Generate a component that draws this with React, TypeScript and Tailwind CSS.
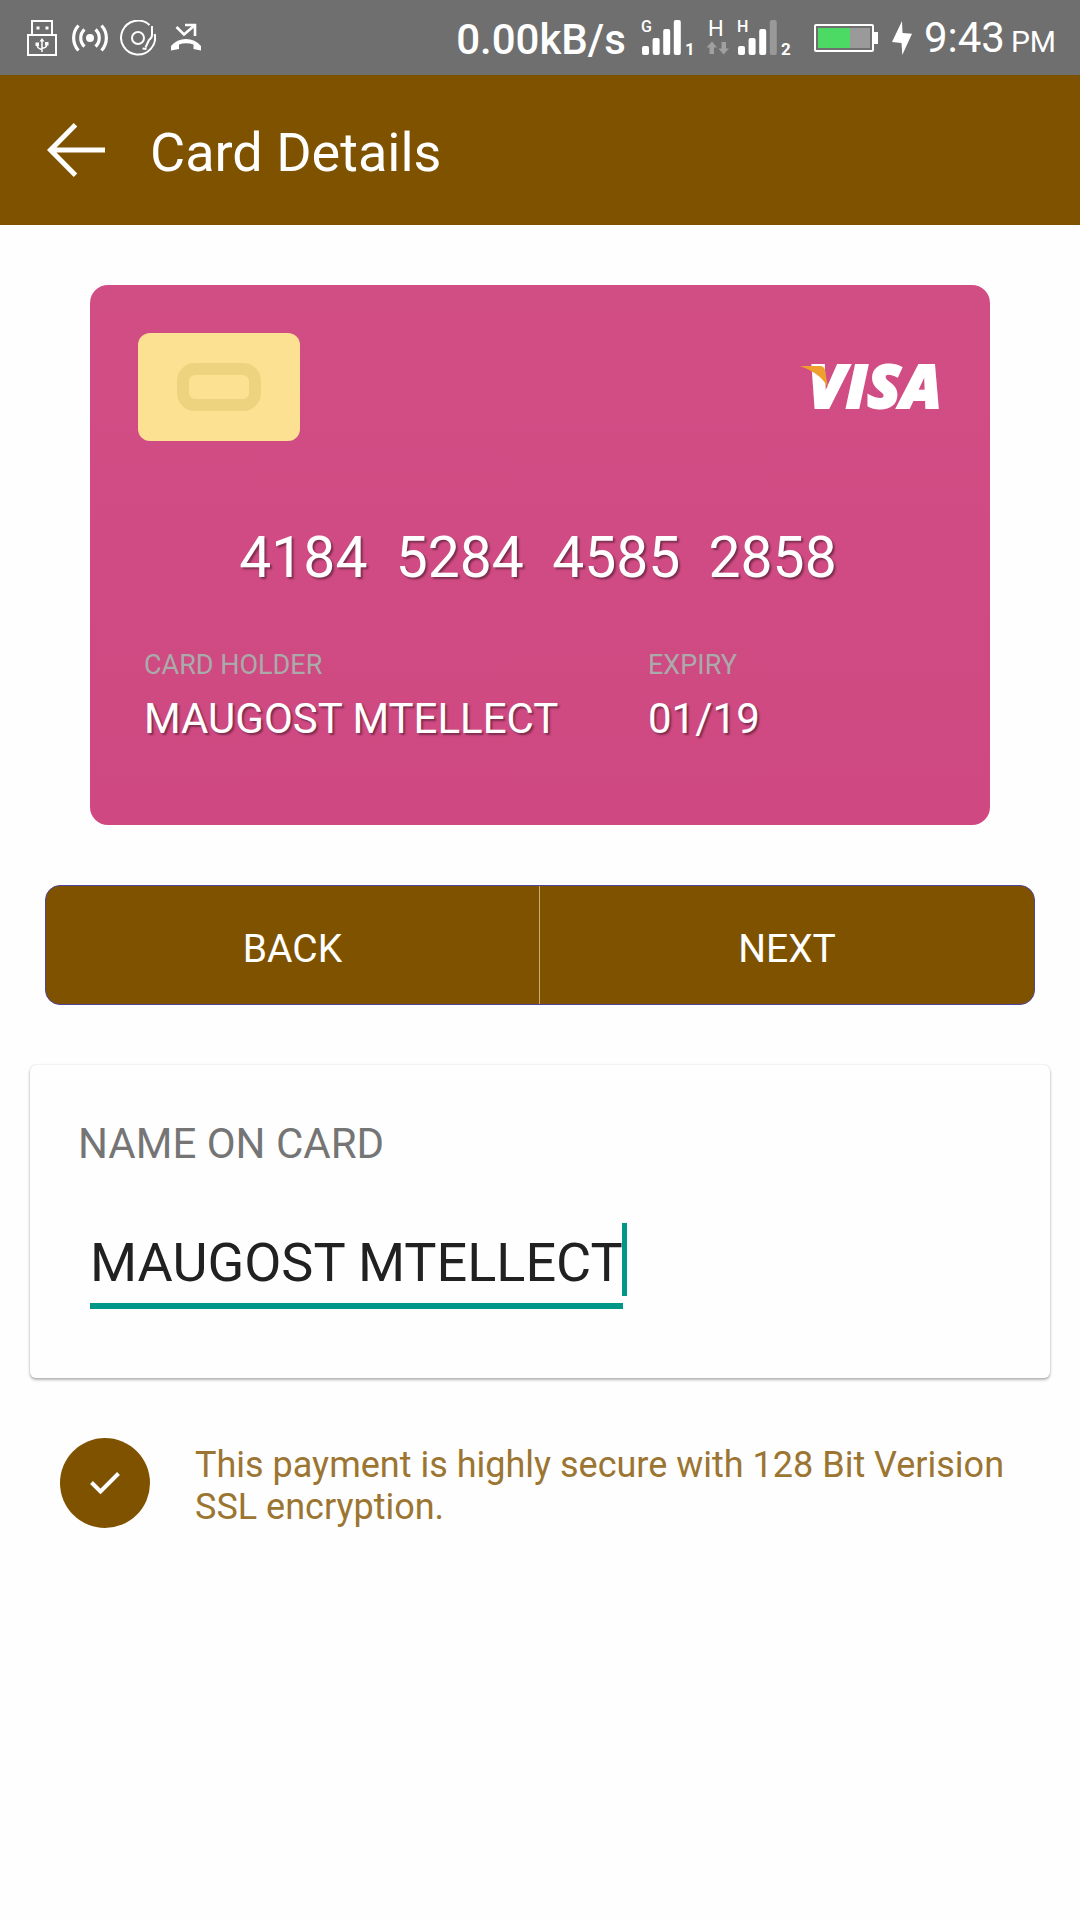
import { useState } from "react";

function UsbIcon() {
  return (
    <svg className="h-9 w-[30px]" viewBox="0 0 30 36" fill="none" stroke="white" strokeWidth="2" aria-hidden="true">
      <path d="M5 14V1h20v13" />
      <path d="M1 15h28v20H1z" />
      <path d="M9.500 6.500h3v3h-3zM18.500 6.500h3v3h-3z" fill="white" stroke="none" />
      <path d="M15 20v12M10.500 24.500v1.500q0 2.500 4.500 3.500M19.500 23.500v2q0 2-4.500 3" strokeWidth="1.500" />
      <path d="M15 18l2.500 3.500h-5zM8.500 22.500h3.500v3.500H8.500zM18 22h3.500v3.500H18z" fill="white" stroke="none" />
    </svg>
  );
}

function HotspotIcon() {
  return (
    <svg className="h-9 w-9" viewBox="0 0 36 36" fill="none" stroke="white" strokeWidth="3.200" aria-hidden="true">
      <circle cx="18" cy="18" r="4" fill="white" stroke="none" />
      <path d="M12.500 9.500a11.500 11.500 0 0 0 0 17M23.500 9.500a11.500 11.500 0 0 1 0 17" />
      <path d="M6.500 5.500a18.500 18.500 0 0 0 0 25M29.500 5.500a18.500 18.500 0 0 1 0 25" />
    </svg>
  );
}

function DiscIcon() {
  return (
    <svg className="h-9 w-9" viewBox="0 0 36 36" fill="none" stroke="white" strokeWidth="2" aria-hidden="true">
      <path d="M29.500 5A17 17 0 1 0 34.700 14" />
      <circle cx="18" cy="18" r="6" />
      <path d="M32 6v9q0 3-3 5l-3.500 7.500M22.500 28.500l4 .5" />
    </svg>
  );
}

function MissedCallIcon() {
  return (
    <svg className="h-9 w-8" viewBox="0 0 32 36" aria-hidden="true">
      <path d="M6.500 7L14 14.500 24.500 5.500M15 5h10v11" fill="none" stroke="white" strokeWidth="2.600" />
      <path d="M1 30.500v-4.500Q7 19 16 19t15 7v4.500L23.500 29v-4.500Q16 22 9 24.500V29z" fill="white" />
    </svg>
  );
}

type SignalProps = { network: string; sim: string; level: number };

function SignalIcon({ network, sim, level }: SignalProps) {
  const tops = [26, 18, 9, 0];
  return (
    <svg className="h-9 w-[52px] overflow-visible" viewBox="0 0 52 36" fill="white" aria-hidden="true">
      {tops.map((top, i) => (
        <rect key={top} x={i * 11 - i * 0.4} y={top} width="7" height={35 - top} rx="2" fill={i < level ? "white" : "#999999"} />
      ))}
      <text x="-1" y="12" fontSize="16" fontWeight="500">{network}</text>
      <text x="43" y="35" fontSize="17" fontWeight="700">{sim}</text>
    </svg>
  );
}

function DataIcon() {
  return (
    <svg className="h-9 w-[23px] overflow-visible" viewBox="0 0 23 36" aria-hidden="true">
      <text x="2" y="16" fontSize="22" fill="white">H</text>
      <path d="M6 21.500l5 6H8V34H3.500v-6.500h-3zM17.500 34.500l-5-6h3V22H20v6.500h3z" fill="#a0a0a0" />
    </svg>
  );
}

function BatteryIcon() {
  return (
    <svg className="h-7 w-16" viewBox="0 0 64 28" aria-hidden="true">
      <rect x="1" y="1" width="58" height="26" rx="1" fill="none" stroke="white" strokeWidth="2" />
      <path d="M60 8h4v12h-4z" fill="white" />
      <path d="M4 4h32v20H4z" fill="#4cda64" />
      <path d="M36 4h20v20H36z" fill="#9a9a9a" />
    </svg>
  );
}

function StatusBar() {
  return (
    <div className="flex h-[75px] items-center justify-between bg-[#6f6f6f] pt-px pr-6 pl-[27px] text-white">
      <div className="flex items-center">
        <UsbIcon />
        <span className="ml-[15px]"><HotspotIcon /></span>
        <span className="ml-3"><DiscIcon /></span>
        <span className="ml-[14px]"><MissedCallIcon /></span>
      </div>
      <div className="flex items-center whitespace-nowrap">
        <span className="pt-1 text-[42px] leading-[50px] font-medium">0.00kB/s</span>
        <span className="ml-4"><SignalIcon network="G" sim="1" level={4} /></span>
        <span className="ml-3"><DataIcon /></span>
        <span className="ml-[9px]"><SignalIcon network="H" sim="2" level={3} /></span>
        <span className="ml-6"><BatteryIcon /></span>
        <svg className="ml-[14px] h-[34px] w-5" viewBox="0 0 20 34" fill="white" aria-hidden="true">
          <path d="M10 0L0 21l9.500 1 .8 12L20 12.700l-9.500-.7z" />
        </svg>
        <span className="ml-3 flex items-baseline gap-1.5 pt-1 text-[42px] leading-[50px]">
          9:43 <span className="text-[30px]">PM</span>
        </span>
      </div>
    </div>
  );
}

function VisaLogo() {
  return (
    <svg className="h-11 w-[142px] overflow-visible" viewBox="0 0 142 44" role="img" aria-label="Visa">
      <text
        x="8"
        y="43"
        fontSize="61"
        fontWeight="800"
        fontStyle="italic"
        fill="white"
        stroke="white"
        strokeWidth="2"
        fontFamily="'Open Sans', sans-serif"
      >
        VISA
      </text>
      <path d="M0 1h20q4 0 5 4l3 18Q22 9 0 1z" fill="#ee9f2d" />
    </svg>
  );
}

function CreditCard({ name }: { name: string }) {
  return (
    <section className="mx-[90px] rounded-[18px] bg-linear-to-b from-[#d14e85] to-[#cf4881] px-12 pt-12 pb-[81px] text-white">
      <div className="flex items-center justify-between">
        <div className="flex h-[108px] w-[162px] items-center justify-center rounded-xl bg-[#fce192]">
          <div className="h-12 w-[84px] rounded-[18px] border-12 border-[#edd27f]" />
        </div>
        <VisaLogo />
      </div>
      <p className="mt-[84px] pr-1 text-center text-[57px] leading-[66px] whitespace-pre [text-shadow:2px_2px_2px_rgba(0,0,0,0.4)]">
        {"4184  5284  4585  2858"}
      </p>
      <dl className="mt-[58px] grid grid-cols-[12fr_7fr] pl-1.5">
        <div>
          <dt className="text-[27px] leading-8 text-[#aaaaaa]">CARD HOLDER</dt>
          <dd className="mt-[13px] text-[42px] leading-[50px] whitespace-nowrap [text-shadow:2px_2px_2px_rgba(0,0,0,0.4)]">{name}</dd>
        </div>
        <div>
          <dt className="text-[27px] leading-8 text-[#aaaaaa]">EXPIRY</dt>
          <dd className="mt-[13px] text-[42px] leading-[50px] [text-shadow:2px_2px_2px_rgba(0,0,0,0.4)]">01/19</dd>
        </div>
      </dl>
    </section>
  );
}

export default function App() {
  const [name, setName] = useState("MAUGOST MTELLECT");
  return (
    <div className="min-h-screen bg-[#fefefe] font-['Roboto',sans-serif]">
      <StatusBar />
      <header className="flex h-[150px] items-center bg-[#7f5200] pl-[47px] text-white">
        <button type="button" aria-label="Go back">
          <svg className="h-[54px] w-[58px]" viewBox="0 0 58 54" fill="none" stroke="white" strokeWidth="5" aria-hidden="true">
            <path d="M28.500 1.800L3.500 27l25 25.200M4 27h54" />
          </svg>
        </button>
        <h1 className="ml-[45px] pt-1.5 text-[54px] leading-[64px]">Card Details</h1>
      </header>

      <main className="pt-[60px]">
        <CreditCard name={name} />

        <div className="mx-[45px] mt-[60px] grid h-[120px] grid-cols-2 overflow-hidden rounded-[15px] border border-[#4f459c] bg-[#7f5200] text-[39px] text-white">
          <button type="button" className="border-r border-[#c8ab7c] pt-2">BACK</button>
          <button type="button" className="pt-2">NEXT</button>
        </div>

        <section className="mx-[30px] mt-[60px] rounded-md bg-[#fefefe] px-12 pt-[54px] pb-[69px] shadow-[0_2px_3px_rgba(0,0,0,0.28),0_0_2px_rgba(0,0,0,0.16)]">
          <label htmlFor="card-name" className="block text-[42px] leading-[50px] text-[#757575]">
            NAME ON CARD
          </label>
          <div className="relative mt-[62px] ml-3 flex w-fit">
            <input
              id="card-name"
              value={name}
              onChange={(e) => setName(e.target.value)}
              className="box-content h-16 border-b-6 border-[#009688] pb-2 text-[54px] leading-[64px] text-[#212121] caret-transparent outline-none [field-sizing:content]"
            />
            <span className="absolute -top-2 -right-1 h-[73px] w-[5px] bg-[#009688]" />
          </div>
        </section>

        <div className="mx-[60px] mt-[60px] flex items-end gap-[45px]">
          <span className="flex size-[90px] shrink-0 items-center justify-center rounded-full bg-[#7f5200]">
            <svg className="h-[22px] w-[30px]" viewBox="0 0 30 22" fill="none" stroke="white" strokeWidth="4" aria-hidden="true">
              <path d="M1.500 10.500l9 9L28.500 1.500" />
            </svg>
          </span>
          <p className="text-[36px] leading-[42px] text-[#9b7531]">
            This payment is highly secure with 128 Bit Verision SSL encryption.
          </p>
        </div>
      </main>
    </div>
  );
}
